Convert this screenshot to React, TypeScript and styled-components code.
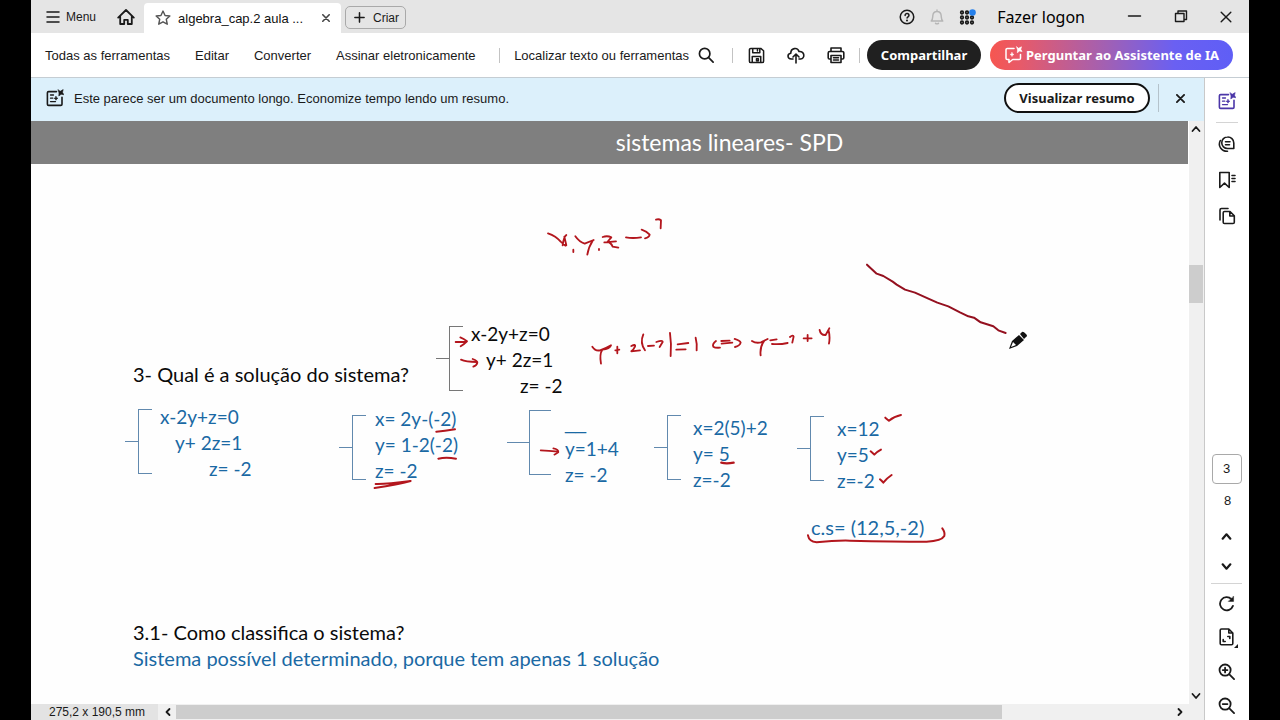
import React from "react";
import styled, { createGlobalStyle } from "styled-components";

const ui = '"Liberation Sans", Arial, sans-serif';
const clean = '"Noto Sans", "Open Sans", sans-serif';
const slide = 'Lato, Carlito, sans-serif';
const blue = "#1a69a4";

const Global = createGlobalStyle`
  *, *::before, *::after { box-sizing: border-box; }
  body { margin: 0; background: #000; font-family: ${ui}; color: #1a1a1a; }
  button { border: 0; padding: 0; background: none; color: inherit; font: inherit; cursor: pointer; }
  svg { display: block; flex: none; }
`;

const Window = styled.div`
  display: flex;
  flex-direction: column;
  min-height: 100vh;
  margin: 0 31px;
  background: #fff;
`;

const TitleBar = styled.header`
  display: flex;
  align-items: center;
  height: 33px;
  padding: 0 17px 0 15px;
  background: #e5e5e5;
`;

const IconButton = styled.button<{ $color?: string }>`
  display: flex;
  align-items: center;
  justify-content: center;
  color: ${(p) => p.$color ?? "#1a1a1a"};
`;

const MenuButton = styled.button`
  display: flex;
  align-items: center;
  gap: 6px;
  margin-right: 21px;
  font-size: 12px;
  line-height: 16px;
`;

const Tab = styled.div`
  display: flex;
  align-items: center;
  align-self: flex-end;
  gap: 7px;
  width: 197px;
  height: 30px;
  margin: 0 4px 0 9px;
  padding: 0 11px;
  border-radius: 4px 4px 0 0;
  background: #fff;
  font-size: 13px;
  color: #111;
`;

const TabTitle = styled.span`
  flex: 1;
  white-space: nowrap;
`;

const CreateButton = styled.button`
  display: flex;
  align-items: center;
  gap: 8px;
  height: 23px;
  margin-top: 2px;
  padding: 0 6px 0 8px;
  border: 1px solid #a9a9a9;
  border-radius: 5px;
  font-size: 12px;
`;

const Account = styled.div`
  display: flex;
  align-items: center;
  gap: 14px;
  margin-left: auto;
`;

const Login = styled.button`
  margin-left: 7px;
  font-family: ${clean};
  font-size: 16px;
  line-height: 20px;
  color: #000;
`;

const WindowControls = styled.div`
  display: flex;
  align-items: center;
  gap: 32px;
  margin-left: 42px;
`;

const Toolbar = styled.div`
  display: flex;
  align-items: center;
  height: 45px;
  padding: 0 16px 0 14px;
  border-bottom: 1px solid #c5cdd3;
  font-size: 13px;
`;

const Nav = styled.nav`
  display: flex;
  gap: 25px;
`;

const NavLink = styled.a`
  color: #1a1a1a;
  text-decoration: none;
  white-space: nowrap;
`;

const Divider = styled.span<{ $height?: number; $color?: string }>`
  width: 1px;
  height: ${(p) => p.$height ?? 15}px;
  background: ${(p) => p.$color ?? "#c3c3c3"};
`;

const ToolGroup = styled.div`
  display: flex;
  align-items: center;
  margin-left: auto;
`;

const SearchButton = styled.button`
  display: flex;
  align-items: center;
  gap: 9px;
  margin: 0 18px 0 14px;
  white-space: nowrap;
`;

const FileTools = styled.div`
  display: flex;
  gap: 22px;
  margin: 0 14px 0 15px;
`;

const Pill = styled.button<{ $kind: "dark" | "ai" | "outline" }>`
  display: flex;
  align-items: center;
  justify-content: center;
  gap: 3px;
  height: 30px;
  border-radius: 15px;
  font-family: ${clean};
  font-size: 13px;
  font-weight: 700;
  white-space: nowrap;
  ${(p) => p.$kind === "dark" && "width: 114px; background: #202020; color: #fff; margin: 0 9px 0 7px;"}
  ${(p) => p.$kind === "ai" && "width: 243px; background: linear-gradient(90deg, #f65650 0%, #e85a68 12%, #a160b4 48%, #6a60f2 76%, #5f5ef6 100%); color: #fff;"}
  ${(p) => p.$kind === "outline" && "width: 146px; border: 2px solid #111; background: #fff;"}
`;

const Workspace = styled.div`
  display: flex;
  flex: 1;
`;

const Main = styled.main`
  display: flex;
  flex: 1;
  flex-direction: column;
  min-width: 0;
`;

const Banner = styled.div`
  display: flex;
  align-items: center;
  height: 43px;
  padding: 0 19px 3px 15px;
  background: #dcf0fb;
  font-size: 13px;
`;

const BannerText = styled.span`
  flex: 1;
  margin-left: 10px;
`;

const BannerEnd = styled.div`
  display: flex;
  align-items: center;
  gap: 8px;
`;

const CloseBanner = styled(IconButton)`
  margin-left: 9px;
`;

const Viewer = styled.div`
  display: flex;
  flex: 1;
`;

const Sheet = styled.article`
  position: relative;
  flex: 1;
  min-width: 0;
  overflow: hidden;
  background: #fefefe;
  color: #0a0a0a;
  font-family: ${slide};
  font-size: 20px;
  line-height: 26px;
`;

const SheetHeader = styled.h1`
  margin: 0;
  padding-left: 240px;
  background: #7f7f7f;
  color: #fff;
  font-size: 23px;
  font-weight: 400;
  line-height: 43px;
  text-align: center;
`;

const Exercise = styled.section`
  padding: 157px 0 0 94px;
`;

const Question = styled.div`
  display: flex;
  align-items: flex-start;
`;

const QuestionText = styled.h2`
  width: 303px;
  margin: 40px 0 0;
  padding-left: 8px;
  font-size: 20px;
  font-weight: 400;
  line-height: 26px;
  white-space: nowrap;
`;

const GivenSystem = styled.div`
  margin-left: 8px;
`;

const Steps = styled.div`
  display: grid;
  grid-template-columns: 214px 168px 147px 143px 150px;
  align-items: start;
  margin-top: 5px;
  color: ${blue};
`;

const System = styled.div<{ $top?: number }>`
  display: flex;
  align-items: flex-start;
  padding-top: ${(p) => p.$top ?? 0}px;
`;

const Brace = styled.div<{ $top?: number; $arm?: number; $gap?: number; $color?: string }>`
  display: flex;
  align-items: center;
  margin: ${(p) => p.$top ?? 0}px ${(p) => p.$gap ?? 8}px 0 0;
  color: ${(p) => p.$color ?? "#6189ae"};
  &::before {
    content: "";
    width: ${(p) => p.$arm ?? 13}px;
    height: 1px;
    background: currentColor;
  }
  &::after {
    content: "";
    width: ${(p) => p.$arm ?? 14}px;
    height: 65px;
    border: 1px solid currentColor;
    border-right: 0;
  }
`;

const Equations = styled.div`
  font-size: 19px;
  white-space: pre;
`;

const Equation = styled.div<{ $indent?: number; $blank?: boolean }>`
  height: 26px;
  padding-left: ${(p) => p.$indent ?? 0}px;
  ${(p) => p.$blank && `font-family: ${ui};`}
`;

const Solution = styled.p`
  margin: 20px 0 0 686px;
  color: ${blue};
`;

const Classification = styled.section`
  padding: 79px 0 32px 102px;
`;

const ClassTitle = styled.h2`
  margin: 0;
  font-size: 20px;
  font-weight: 400;
  line-height: 26px;
`;

const Answer = styled.p`
  margin: 0;
  color: ${blue};
`;

const Ink = styled.svg`
  position: absolute;
  top: 0;
  left: 0;
  pointer-events: none;
`;

const VerticalScroll = styled.div`
  display: flex;
  flex-direction: column;
  align-items: center;
  width: 15px;
  margin-left: 1px;
  padding: 3px 1px 3px 0;
  background: #f0f0f0;
`;

const VerticalThumb = styled.div`
  width: 14px;
  height: 38px;
  margin: 131px 0 auto;
  background: #cdcdcd;
`;

const StatusBar = styled.footer`
  display: flex;
  align-items: center;
  height: 16px;
  padding-right: 19px;
  background: #f0f0f0;
`;

const PageSize = styled.span`
  width: 127px;
  padding-left: 18px;
  background: #e3e3e3;
  font-size: 12px;
  line-height: 16px;
  white-space: nowrap;
`;

const HorizontalTrack = styled.div`
  display: flex;
  flex: 1;
  height: 14px;
  margin: 0 4px 0 3px;
`;

const HorizontalThumb = styled.div`
  width: 83%;
  background: #cdcdcd;
`;

const ArrowButton = styled(IconButton)<{ $left?: number }>`
  margin-left: ${(p) => p.$left ?? 0}px;
`;

const Rail = styled.aside`
  display: flex;
  flex-direction: column;
  justify-content: space-between;
  width: 45px;
  border-left: 1px solid #c9c9c9;
  background: #fff;
`;

const RailGroup = styled.div<{ $gap: number }>`
  display: flex;
  flex-direction: column;
  align-items: center;
  gap: ${(p) => p.$gap}px;
  padding-right: 1px;
`;

const RailTop = styled(RailGroup)`
  padding-top: 8px;
`;

const RailButton = styled(IconButton)<{ $height?: number }>`
  width: 32px;
  height: ${(p) => p.$height ?? 30}px;
`;

const RailRule = styled.hr<{ $width: number }>`
  width: ${(p) => p.$width}px;
  height: 1px;
  margin: 0;
  border: 0;
  background: #d4d4d4;
`;

const PageInput = styled.input`
  width: 30px;
  height: 30px;
  padding: 0 0 2px;
  border: 1px solid #a9a9a9;
  border-radius: 4px;
  background: #fff;
  color: #1a1a1a;
  font-family: ${ui};
  font-size: 13px;
  text-align: center;
`;

const PageTotal = styled.span`
  padding: 3px 0 8px 2px;
  font-size: 13px;
  line-height: 20px;
`;

type IconProps = { w?: number; h?: number; sw?: number; box?: string; children: React.ReactNode };

const Icon = ({ w = 18, h = 18, sw = 1.6, box = "0 0 18 18", children }: IconProps) => (
  <svg width={w} height={h} viewBox={box} fill="none" stroke="currentColor" strokeWidth={sw} strokeLinecap="round" strokeLinejoin="round" aria-hidden="true">
    {children}
  </svg>
);

const SummaryIcon = () => (
  <Icon>
    <path d="M10.5 2.6H2.6a1.2 1.2 0 0 0-1.2 1.2v11.4a1.2 1.2 0 0 0 1.2 1.2h12.2a1.2 1.2 0 0 0 1.2-1.2V8.2" />
    <path d="M4.5 6h3M4.5 9.2h2.3M4.5 12.6h5" strokeWidth="1.3" />
    <path d="M10 7.4l.6 1.3 1.3.6-1.3.6L10 11.2l-.6-1.3-1.3-.6 1.3-.6z" fill="currentColor" strokeWidth=".6" />
    <path d="M12.2.8l2 1.500L17.200.6l-.7 2.700 1.300 2.400-2.700-.4-2.300 1.700.2-2.800z" fill="currentColor" strokeWidth=".6" />
  </Icon>
);

const Chevron = ({ d }: { d: string }) => (
  <Icon w={10} h={10} box="0 0 10 10" sw={1.8}>
    <path d={d} />
  </Icon>
);

const Cross = ({ size, sw }: { size: number; sw: number }) => (
  <Icon w={size} h={size} box="0 0 10 10" sw={sw}>
    <path d="M1 1l8 8M9 1L1 9" />
  </Icon>
);

const up = "M1.5 7L5 3l3.5 4";
const down = "M1.5 3L5 7l3.5-4";
const left = "M6.5 2L3.5 5l3 3";
const right = "M3.5 2l3 3-3 3";

const Annotations = () => (
  <Ink width="1157" height="583" viewBox="0 0 1157 583" fill="none" stroke="#b3161d" strokeLinecap="round" strokeLinejoin="round" aria-hidden="true">
    {/* x, y, z → ? */}
    <g transform="translate(489 -1) scale(.3333)" strokeWidth="5.5">
      <path d="M84 340Q108 348 122 365L136 377M139 345Q131 351 128 376M133 350L139 376M160 389v7" />
      <path d="M166 349Q178 366 194 371L221 360M218 362Q206 380 202 404M237 387v3" />
      <path d="M248 351Q262 346 274 352L262 366Q273 367 278 380L295 383M253 367L288 364" />
      <path d="M318 352Q338 356 363 352M365 329Q380 334 389 344Q388 352 375 355" />
      <path d="M408 299Q417 296 423 301L422 325" />
    </g>
    {/* substitution next to the given system */}
    <g transform="translate(394 189) scale(.3333)" strokeWidth="5.5">
      <path d="M92 96H124M106 82Q116 86 126 94Q118 102 107 109" />
      <path d="M108 149Q122 156 156 156M143 147Q158 152 157 158Q155 166 145 170" />
      <path d="M502 110Q511 124 525 121Q545 114 558 106Q554 116 532 119Q523 132 528 161M577 110v20M571 121l12-2" />
      <path d="M619 108Q633 101 630 110Q626 119 619 124L645 121M655 73Q644 98 660 121M669 108L687 107M694 96Q714 89 713 96L704 111M735 69Q740 102 737 138M758 103L790 99M754 119L782 118M812 83Q817 102 815 121" />
      <path d="M873 93Q861 102 865 110Q870 114 885 113M889 93L914 92M890 101L922 98M929 87Q945 92 947 98Q945 107 930 111" />
      <path d="M981 93Q993 101 1008 97L1028 87M1018 92Q1004 111 1007 136M1036 91L1055 88M1041 102Q1065 104 1088 99M1095 81Q1105 73 1106 80L1102 98M1136 85H1160M1148 75v18M1184 60Q1187 76 1202 75L1213 55M1211 62Q1216 80 1212 101" />
    </g>
    {/* underlines in the second system */}
    <g transform="translate(79 234) scale(.3333)" strokeWidth="6">
      <path d="M979 230Q1003 229 1035 223M985 311Q1008 306 1038 311M797 387Q828 388 902 378Q865 389 794 399" />
    </g>
    {/* arrow, underline, ticks and the solution bracket */}
    <g transform="translate(459 279) scale(.3333)" strokeWidth="5">
      <path d="M152 151Q175 152 205 155M190 145Q207 148 205 157L193 164" />
      <path d="M694 188Q709 192 731 188" strokeWidth="7" />
      <path d="M1186 53Q1191 57 1197 62Q1213 49 1233 45M1142 154Q1147 158 1153 164Q1160 156 1173 149M1170 238Q1175 242 1180 248Q1190 235 1205 225" strokeWidth="6" />
      <path d="M954 406Q957 424 980 427Q1035 421 1080 422Q1210 425 1310 425Q1355 423 1363 408Q1366 397 1357 385" strokeWidth="6" />
    </g>
    {/* stroke being drawn and the pencil pointer */}
    <g transform="translate(819 129) scale(.3333)" stroke="#94101f" strokeWidth="6">
      <path d="M51 44L80 71L100 78L128 95L140 104L165 119L195 128L235 146L262 158L295 169L330 187L355 199L372 203L392 217L430 229L445 241L467 249" />
    </g>
    <g stroke="none" fill="#111">
      <path d="M978 228l3-8 7-6 5 5-7 6zM989 213l2-2q1-1 4 2 2 2 0 3l-2 2z" />
      <path d="M980 226l2-5 3 3z" fill="#fff" />
    </g>
  </Ink>
);

export default function App() {
  return (
    <>
      <Global />
      <Window>
        <TitleBar>
          <MenuButton>
            <Icon w={14} h={14} box="0 0 14 14" sw={1.5}><path d="M1 2h12M1 7h12M1 12h12" /></Icon>
            Menu
          </MenuButton>
          <IconButton aria-label="Início">
            <Icon sw={1.8}><path d="M1.2 9.6L9 2l7.8 7.6M3.2 8v8h4v-4.2h3.6V16h4V8" /></Icon>
          </IconButton>
          <Tab>
            <IconButton aria-label="Favorito" $color="#555">
              <Icon w={16} h={16}><path d="M9 1.2l2.3 5 5.4.6-4 3.7 1.1 5.5L9 13.3 4.200 16l1.100-5.500-4-3.700 5.400-.6z" /></Icon>
            </IconButton>
            <TabTitle>algebra_cap.2 aula ...</TabTitle>
            <IconButton aria-label="Fechar guia" $color="#444"><Cross size={8} sw={2} /></IconButton>
          </Tab>
          <CreateButton>
            <Icon w={11} h={11} box="0 0 10 10" sw={1.4}><path d="M5 .8v8.400M.8 5h8.400" /></Icon>
            Criar
          </CreateButton>
          <Account>
            <IconButton aria-label="Ajuda">
              <Icon w={16} h={16} sw={1.700}>
                <circle cx="9" cy="9" r="7.600" />
                <path d="M6.900 7.200c0-2.900 4.300-2.700 4.300 0 0 1.500-2.100 1.600-2.100 3" />
                <path d="M9 12.800v.1" strokeWidth="2.200" />
              </Icon>
            </IconButton>
            <IconButton aria-label="Notificações" $color="#b5b5b5">
              <Icon w={16} h={18}><path d="M2.500 13.500c1.800-1.600 1.600-3.500 1.800-6C4.500 4.500 6.500 2.800 9 2.800s4.500 1.700 4.700 4.700c.2 2.500 0 4.400 1.800 6zM9 2.500V1M7.300 16c.8 1 2.600 1 3.400 0" /></Icon>
            </IconButton>
            <IconButton aria-label="Aplicativos">
              <Icon w={17} h={18} box="0 0 17 18" sw={1.700}>
                {[5, 10, 15].map((y) => [3, 8, 13].map((x) => <circle key={`${x}-${y}`} cx={x} cy={y - 0.500} r="1.300" />))}
                <circle cx="13.500" cy="4.500" r="3.300" fill="#2680eb" stroke="none" />
              </Icon>
            </IconButton>
            <Login>Fazer logon</Login>
          </Account>
          <WindowControls>
            <IconButton aria-label="Minimizar"><Icon w={15} h={14} box="0 0 15 14" sw={1.500}><path d="M1.500 6h12" /></Icon></IconButton>
            <IconButton aria-label="Restaurar">
              <Icon w={14} h={14} box="0 0 14 14" sw={1.400}><path d="M1.500 3.500h8.500v8H1.500zM4 3.500V1h8.500v8.500H10" /></Icon>
            </IconButton>
            <IconButton aria-label="Fechar"><Cross size={12} sw={1.200} /></IconButton>
          </WindowControls>
        </TitleBar>

        <Toolbar>
          <Nav>
            <NavLink href="#ferramentas">Todas as ferramentas</NavLink>
            <NavLink href="#editar">Editar</NavLink>
            <NavLink href="#converter">Converter</NavLink>
            <NavLink href="#assinar">Assinar eletronicamente</NavLink>
          </Nav>
          <ToolGroup>
            <Divider />
            <SearchButton>
              Localizar texto ou ferramentas
              <Icon w={16} h={16} sw={1.900}><circle cx="7.500" cy="7.500" r="5.900" /><path d="M12 12l5 5" /></Icon>
            </SearchButton>
            <Divider />
            <FileTools>
              <IconButton aria-label="Salvar">
                <Icon w={17} h={17}><path d="M3 1.500h10.500L16.500 4v11a1.500 1.500 0 0 1-1.500 1.500H3A1.500 1.500 0 0 1 1.500 15V3A1.500 1.500 0 0 1 3 1.500zM5 1.500V6h7.500V1.500M10 3v1.300M4.500 16.500V10h9v6.500M9 12.500h2v2H9z" /></Icon>
              </IconButton>
              <IconButton aria-label="Enviar para a nuvem">
                <Icon><path d="M6 13H4.200C.2 13-.1 7.700 3.800 7.300 3.600 2 10.500.8 12 5.500c6-.8 6.200 7.300 1.700 7.500H12M9 17V8.500M6 11l3-3 3 3" /></Icon>
              </IconButton>
              <IconButton aria-label="Imprimir">
                <Icon><path d="M4 5.500V2h10v3.500M4 13H2.500A1.300 1.300 0 0 1 1.200 11.700V7a1.500 1.500 0 0 1 1.500-1.500h12.600A1.500 1.500 0 0 1 16.800 7v4.700a1.300 1.300 0 0 1-1.300 1.300H14M4 9.500h10v7H4zM6.500 11.800h5M6.500 14h5" /></Icon>
              </IconButton>
            </FileTools>
            <Divider />
            <Pill $kind="dark">Compartilhar</Pill>
            <Pill $kind="ai">
              <Icon w={19} h={18} sw={1.500}>
                <path d="M9.500 2.500H2.800A1.300 1.300 0 0 0 1.500 3.800v8.400a1.300 1.300 0 0 0 1.300 1.300h1.700v3l3.700-3h6.500a1.300 1.300 0 0 0 1.300-1.300V8.500" />
                <path d="M7.500 6.500l.6 1.400 1.400.6-1.400.6-.6 1.400-.6-1.400-1.400-.6 1.400-.6z" fill="currentColor" strokeWidth=".5" />
                <path d="M12.200.8L14 2.300 17 .8l-.7 2.500 1.300 2.200-2.600-.4-2.200 1.600.2-2.600z" fill="currentColor" strokeWidth=".6" />
              </Icon>
              Perguntar ao Assistente de IA
            </Pill>
          </ToolGroup>
        </Toolbar>

        <Workspace>
          <Main>
            <Banner>
              <SummaryIcon />
              <BannerText>Este parece ser um documento longo. Economize tempo lendo um resumo.</BannerText>
              <BannerEnd>
                <Pill $kind="outline">Visualizar resumo</Pill>
                <Divider $height={28} $color="#b4c2cb" />
                <CloseBanner aria-label="Fechar aviso"><Cross size={9} sw={2} /></CloseBanner>
              </BannerEnd>
            </Banner>

            <Viewer>
              <Sheet>
                <SheetHeader>sistemas lineares- SPD</SheetHeader>
                <Exercise>
                  <Question>
                    <QuestionText>3- Qual é a solução do sistema?</QuestionText>
                    <GivenSystem>
                      <System>
                        <Brace $top={5} $color="#777" />
                        <Equations>
                          <Equation>x-2y+z=0</Equation>
                          <Equation $indent={15}>y+ 2z=1</Equation>
                          <Equation $indent={49}>z= -2</Equation>
                        </Equations>
                      </System>
                    </GivenSystem>
                  </Question>
                  <Steps>
                    <System>
                      <Brace $top={5} />
                      <Equations>
                        <Equation>x-2y+z=0</Equation>
                        <Equation $indent={15}>y+ 2z=1</Equation>
                        <Equation $indent={49}>z= -2</Equation>
                      </Equations>
                    </System>
                    <System $top={2}>
                      <Brace $top={9} $gap={9} />
                      <Equations>
                        <Equation>x= 2y-(-2)</Equation>
                        <Equation>y= 1-2(-2)</Equation>
                        <Equation>z= -2</Equation>
                      </Equations>
                    </System>
                    <System $top={6}>
                      <Brace $arm={22} $gap={14} />
                      <Equations>
                        <Equation $blank>__</Equation>
                        <Equation>y=1+4</Equation>
                        <Equation>z= -2</Equation>
                      </Equations>
                    </System>
                    <System $top={11}>
                      <Brace $gap={12} />
                      <Equations>
                        <Equation>x=2(5)+2</Equation>
                        <Equation>y= 5</Equation>
                        <Equation>z=-2</Equation>
                      </Equations>
                    </System>
                    <System $top={12}>
                      <Brace $gap={13} />
                      <Equations>
                        <Equation>x=12</Equation>
                        <Equation>y=5</Equation>
                        <Equation>z=-2</Equation>
                      </Equations>
                    </System>
                  </Steps>
                  <Solution>c.s= (12,5,-2)</Solution>
                </Exercise>
                <Classification>
                  <ClassTitle>3.1- Como classifica o sistema?</ClassTitle>
                  <Answer>Sistema possível determinado, porque tem apenas 1 solução</Answer>
                </Classification>
                <Annotations />
              </Sheet>
              <VerticalScroll>
                <IconButton aria-label="Rolar para cima"><Chevron d={up} /></IconButton>
                <VerticalThumb />
                <IconButton aria-label="Rolar para baixo"><Chevron d={down} /></IconButton>
              </VerticalScroll>
            </Viewer>

            <StatusBar>
              <PageSize>275,2 x 190,5 mm</PageSize>
              <ArrowButton $left={5} aria-label="Rolar para a esquerda"><Chevron d={left} /></ArrowButton>
              <HorizontalTrack><HorizontalThumb /></HorizontalTrack>
              <ArrowButton aria-label="Rolar para a direita"><Chevron d={right} /></ArrowButton>
            </StatusBar>
          </Main>

          <Rail>
            <RailTop $gap={6}>
              <RailButton aria-label="Assistente de IA" $color="#4b36a8"><SummaryIcon /></RailButton>
              <RailRule $width={22} />
              <RailButton aria-label="Comentários">
                <Icon><path d="M9.500 2a6 6 0 0 1 6.300 6v5.500H9.500A5.700 5.700 0 0 1 9.500 2zM7.500 6.800h4.500M7.500 9.800h4M2.300 5.500C-.5 11 3.500 16.500 9.500 16.300" /></Icon>
              </RailButton>
              <RailButton aria-label="Marcadores">
                <Icon><path d="M1.800 1.500h9.400v15l-4.700-4.300-4.700 4.300zM14 4.500h3M14 7.500h3M14 10.500h3" /></Icon>
              </RailButton>
              <RailButton aria-label="Páginas">
                <Icon><path d="M6.500 4.500h5.500l4.300 4.300v6.400a1.300 1.300 0 0 1-1.300 1.300H6.500a1.300 1.300 0 0 1-1.300-1.300V5.800a1.300 1.300 0 0 1 1.300-1.300zM11.800 4.800V9h4.200M2 13V3a1.500 1.500 0 0 1 1.500-1.500H10" /></Icon>
              </RailButton>
            </RailTop>
            <RailGroup $gap={4}>
              <PageInput aria-label="Página atual" defaultValue="3" />
              <PageTotal>8</PageTotal>
              <RailButton $height={26} aria-label="Página anterior"><Icon w={11} h={11} box="0 0 10 10" sw={2}><path d={up} /></Icon></RailButton>
              <RailButton $height={26} aria-label="Próxima página"><Icon w={11} h={11} box="0 0 10 10" sw={2}><path d={down} /></Icon></RailButton>
              <RailRule $width={31} />
              <RailButton aria-label="Girar">
                <Icon w={17} h={17} sw={1.900}><path d="M15.800 11.500A7 7 0 1 1 14.300 4.500" /><path d="M16.500 1.500v5.300h-5.300z" fill="currentColor" strokeWidth=".5" /></Icon>
              </RailButton>
              <RailButton aria-label="Ajustar página">
                <Icon w={22} h={22} box="-2 -2 22 22"><path d="M3.500 1h7.300l4 4v10.500a1.300 1.300 0 0 1-1.300 1.300h-10a1.300 1.300 0 0 1-1.300-1.300V2.300A1.300 1.300 0 0 1 3.500 1zM10.800 1v4h4M9.800 8.500h2v2M7.200 13.500h-2v-2" /><path d="M20 16v4h-4z" fill="currentColor" stroke="none" /></Icon>
              </RailButton>
              <RailButton aria-label="Ampliar">
                <Icon w={17} h={17} sw={1.900}><circle cx="7.500" cy="7.500" r="5.900" /><path d="M12 12l5 5M5 7.500h5M7.500 5v5" /></Icon>
              </RailButton>
              <RailButton aria-label="Reduzir">
                <Icon w={17} h={17} sw={1.900}><circle cx="7.500" cy="7.500" r="5.900" /><path d="M12 12l5 5M5 7.500h5" /></Icon>
              </RailButton>
            </RailGroup>
          </Rail>
        </Workspace>
      </Window>
    </>
  );
}
